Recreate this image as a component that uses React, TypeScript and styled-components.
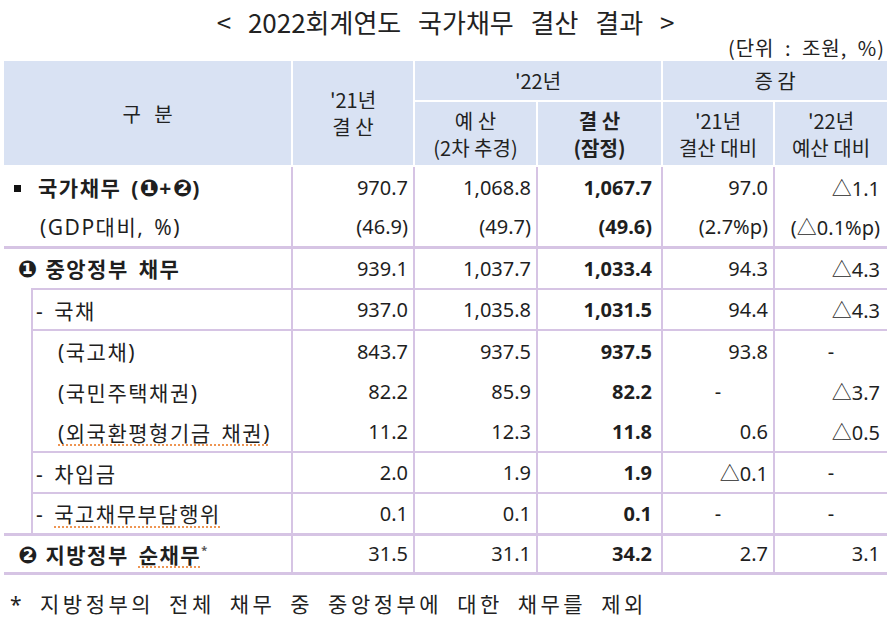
import React from "react";
import styled, { createGlobalStyle } from "styled-components";

const LINE = "#d6c4e4";
const HEAD_BG = "#d9e2f3";

const GlobalStyle = createGlobalStyle`
  html, body {
    margin: 0;
    padding: 0;
    background: #ffffff;
  }
  body {
    font-family: "Noto Sans", "Noto Sans CJK KR", sans-serif;
    color: #1f1f1f;
  }
`;

const Page = styled.div`
  width: 894px;
  height: 621px;
  padding-left: 4px;
  box-sizing: border-box;
  overflow: hidden;
`;

const Title = styled.h1`
  margin: 0;
  padding-top: 5px;
  width: 883px;
  height: 33px;
  line-height: 33px;
  text-align: center;
  font-family: "Noto Sans CJK KR", sans-serif;
  font-weight: 400;
  font-size: 26px;
  word-spacing: 11px;
  color: #222;
`;

const Unit = styled.div`
  width: 881px;
  height: 21px;
  line-height: 20px;
  text-align: right;
  font-family: "Noto Sans CJK KR", sans-serif;
  font-size: 20px;
  letter-spacing: 1px;
  word-spacing: 5px;
  color: #222;
`;

const Table = styled.table`
  border-collapse: collapse;
  table-layout: fixed;
  width: 883px;
`;

const HeadRow = styled.tr<{ $h: number }>`
  height: ${(p) => p.$h}px;
`;

const HeadCell = styled.th<{ $bold?: boolean }>`
  background: ${HEAD_BG};
  border: 2px solid #ffffff;
  padding: 0;
  font-family: "Noto Sans CJK KR", sans-serif;
  font-weight: ${(p) => (p.$bold ? 700 : 400)};
  font-size: 20px;
  line-height: 27px;
  color: #222;
  text-align: center;
  vertical-align: middle;
  white-space: nowrap;
`;

const HeadLine = styled.div`
  height: 27px;
`;

const BodyRow = styled.tr<{ $h: number }>`
  height: ${(p) => p.$h}px;
`;

type Edge = "none" | "thin" | "thick";

const edge = (e: Edge) =>
  e === "none" ? "none" : `${e === "thick" ? 3 : 2}px solid ${LINE}`;

const Label = styled.td<{ $top: Edge; $bottom?: Edge; $pad: number; $first?: boolean; $bold?: boolean }>`
  border-top: ${(p) => edge(p.$top)};
  border-bottom: ${(p) => edge(p.$bottom || "none")};
  border-left: ${(p) => (p.$first ? "none" : `2px solid ${LINE}`)};
  padding: 0 0 0 ${(p) => p.$pad}px;
  font-family: "Noto Sans", "Noto Sans CJK KR", sans-serif;
  font-size: 21px;
  font-weight: ${(p) => (p.$bold ? 700 : 400)};
  letter-spacing: 1.5px;
  word-spacing: 3px;
  white-space: nowrap;
  vertical-align: middle;
`;

const Indent = styled.td`
  border: none;
  padding: 0;
`;

const Num = styled.td<{ $top: Edge; $bottom?: Edge; $pr: number; $bold?: boolean; $center?: boolean }>`
  border-top: ${(p) => edge(p.$top)};
  border-bottom: ${(p) => edge(p.$bottom || "none")};
  border-left: 2px solid ${LINE};
  padding: 0 ${(p) => (p.$center ? 0 : p.$pr)}px 0 0;
  text-align: ${(p) => (p.$center ? "center" : "right")};
  font-family: "Noto Sans", "Noto Sans CJK KR", sans-serif;
  font-size: 20px;
  font-weight: ${(p) => (p.$bold ? 700 : 400)};
  color: #1f1f1f;
  white-space: nowrap;
  vertical-align: middle;
`;

const Bullet = styled.span`
  display: inline-block;
  width: 7px;
  height: 7px;
  background: #111;
  margin-right: 17px;
  vertical-align: 4px;
`;

const Circled = styled.span<{ $gap?: number }>`
  font-family: "DejaVu Sans", sans-serif;
  font-size: 23px;
  margin-right: ${(p) => p.$gap ?? 8}px;
  letter-spacing: 0;
`;

const Spell = styled.span`
  text-decoration: underline dotted #ee9552;
  text-decoration-thickness: 2px;
  text-underline-offset: 4px;
`;

const Star = styled.sup`
  font-size: 11px;
  vertical-align: 9px;
  line-height: 0;
  color: #555;
`;

const Tri = styled.span`
  font-family: "Noto Sans CJK KR", sans-serif;
  font-weight: 400;
`;

const Note = styled.div`
  margin-top: 13px;
  padding-left: 6px;
  font-family: "Noto Sans", "Noto Sans CJK KR", sans-serif;
  font-size: 21px;
  letter-spacing: 3.5px;
  word-spacing: 6px;
  color: #222;
`;

type Row = {
  label: React.ReactNode;
  vals: string[];
  pad: number;
  top: Edge;
  h: number;
  bold?: boolean;
  inner?: boolean;
  bottom?: Edge;
};

const renderVal = (v: string) =>
  v.includes("△") ? (
    <>
      {v.split("△")[0]}
      <Tri>△</Tri>
      {v.split("△")[1]}
    </>
  ) : (
    v
  );

const rows: Row[] = [
  {
    label: (
      <>
        <Bullet />
        국가채무 (<Circled $gap={0}>❶</Circled>+<Circled $gap={0}>❷</Circled>)
      </>
    ),
    vals: ["970.7", "1,068.8", "1,067.7", "97.0", "△1.1"],
    pad: 10,
    top: "none",
    h: 41,
    bold: true,
  },
  {
    label: "(GDP대비, %)",
    vals: ["(46.9)", "(49.7)", "(49.6)", "(2.7%p)", "(△0.1%p)"],
    pad: 36,
    top: "none",
    h: 40,
  },
  {
    label: (
      <>
        <Circled>❶</Circled>중앙정부 채무
      </>
    ),
    vals: ["939.1", "1,037.7", "1,033.4", "94.3", "△4.3"],
    pad: 14,
    top: "thick",
    h: 42,
    bold: true,
  },
  { label: "- 국채", vals: ["937.0", "1,035.8", "1,031.5", "94.4", "△4.3"], pad: 3, top: "thin", h: 41, inner: true },
  { label: "(국고채)", vals: ["843.7", "937.5", "937.5", "93.8", "-"], pad: 25, top: "thin", h: 41, inner: true },
  { label: "(국민주택채권)", vals: ["82.2", "85.9", "82.2", "-", "△3.7"], pad: 25, top: "none", h: 41, inner: true },
  {
    label: <Spell>(외국환평형기금 채권)</Spell>,
    vals: ["11.2", "12.3", "11.8", "0.6", "△0.5"],
    pad: 25,
    top: "none",
    h: 40,
    inner: true,
  },
  { label: "- 차입금", vals: ["2.0", "1.9", "1.9", "△0.1", "-"], pad: 3, top: "thin", h: 41, inner: true },
  {
    label: (
      <>
        - <Spell>국고채무부담행위</Spell>
      </>
    ),
    vals: ["0.1", "0.1", "0.1", "-", "-"],
    pad: 3,
    top: "thin",
    h: 41,
    inner: true,
  },
  {
    label: (
      <>
        <Circled>❷</Circled>지방정부 <Spell>순채무</Spell>
        <Star>*</Star>
      </>
    ),
    vals: ["31.5", "31.1", "34.2", "2.7", "3.1"],
    pad: 14,
    top: "thick",
    h: 39,
    bold: true,
    bottom: "thick",
  },
];

const padRight = [5, 5, 9, 5, 7];

const App: React.FC = () => {
  return (
    <Page>
      <GlobalStyle />
      <Title>&lt; 2022회계연도 국가채무 결산 결과 &gt;</Title>
      <Unit>(단위 : 조원, %)</Unit>
      <Table>
        <colgroup>
          <col style={{ width: 28 }} />
          <col style={{ width: 260 }} />
          <col style={{ width: 122 }} />
          <col style={{ width: 123 }} />
          <col style={{ width: 125 }} />
          <col style={{ width: 112 }} />
          <col style={{ width: 113 }} />
        </colgroup>
        <thead>
          <HeadRow $h={41}>
            <HeadCell colSpan={2} rowSpan={2} style={{ borderLeft: "none" }}>
              구&nbsp;&nbsp;&nbsp;분
            </HeadCell>
            <HeadCell rowSpan={2}>
              <HeadLine>'21년</HeadLine>
              <HeadLine>결 산</HeadLine>
            </HeadCell>
            <HeadCell colSpan={2}>'22년</HeadCell>
            <HeadCell colSpan={2} style={{ borderRight: "none" }}>
              증 감
            </HeadCell>
          </HeadRow>
          <HeadRow $h={65}>
            <HeadCell>
              <HeadLine>예 산</HeadLine>
              <HeadLine>(2차 추경)</HeadLine>
            </HeadCell>
            <HeadCell $bold>
              <HeadLine>결 산</HeadLine>
              <HeadLine>(잠정)</HeadLine>
            </HeadCell>
            <HeadCell>
              <HeadLine>'21년</HeadLine>
              <HeadLine>결산 대비</HeadLine>
            </HeadCell>
            <HeadCell style={{ borderRight: "none" }}>
              <HeadLine>'22년</HeadLine>
              <HeadLine>예산 대비</HeadLine>
            </HeadCell>
          </HeadRow>
        </thead>
        <tbody>
          {rows.map((r, i) => (
            <BodyRow key={i} $h={r.h}>
              {r.inner && i === 3 && <Indent rowSpan={6} />}
              <Label
                colSpan={r.inner ? 1 : 2}
                $top={r.top}
                $bottom={r.bottom}
                $pad={r.pad}
                $first={!r.inner}
                $bold={r.bold}
              >
                {r.label}
              </Label>
              {r.vals.map((v, j) => (
                <Num
                  key={j}
                  $top={r.top}
                  $bottom={r.bottom}
                  $pr={padRight[j]}
                  $bold={j === 2}
                  $center={v === "-"}
                >
                  {renderVal(v)}
                </Num>
              ))}
            </BodyRow>
          ))}
        </tbody>
      </Table>
      <Note>* 지방정부의 전체 채무 중 중앙정부에 대한 채무를 제외</Note>
    </Page>
  );
};

export default App;
